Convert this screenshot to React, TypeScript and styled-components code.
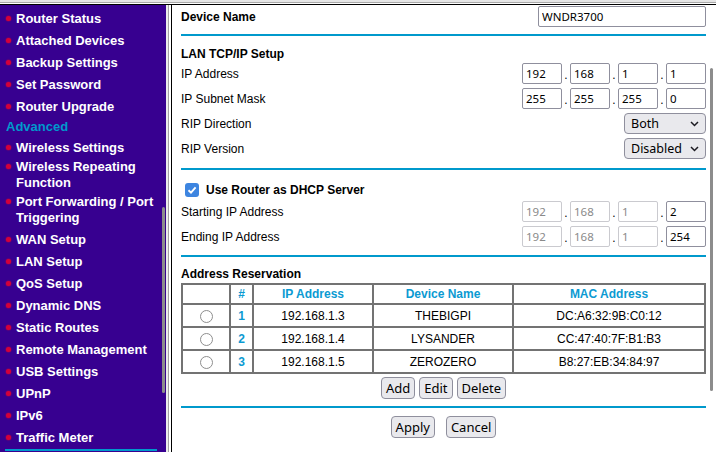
import React from "react";
import styled, { createGlobalStyle } from "styled-components";

const GlobalStyle = createGlobalStyle`
  html, body {
    margin: 0;
    padding: 0;
    background: #fff;
  }
  body {
    overflow: hidden;
    font-family: "Liberation Sans", Arial, sans-serif;
  }
  * {
    box-sizing: border-box;
  }
`;

const TEAL = "#0099cc";

const Page = styled.div`
  position: relative;
  width: 716px;
  height: 452px;
  display: flex;
  flex-direction: column;
  overflow: hidden;
  background: #fff;
`;

const TopEdge = styled.div`
  height: 5px;
  flex-shrink: 0;
  background: linear-gradient(
    to bottom,
    #e6e6e6 0 2px,
    #a9a9a9 2px 3px,
    #fff 3px 4px,
    #000 4px 5px
  );
`;

const Frames = styled.div`
  flex: 1;
  display: flex;
  min-height: 0;
`;

/* left menu frame */
const Sidebar = styled.nav`
  width: 166px;
  flex-shrink: 0;
  background: #370090;
  padding: 3px 8px 0 0;
  overflow: hidden;
  font: bold 13px/16px "Liberation Sans", Arial, sans-serif;
  color: #fff;
`;

const SideItem = styled.div<{ $multi?: boolean }>`
  display: flex;
  align-items: flex-start;
  padding: ${(p) => (p.$multi ? "0 0 3px" : "3px 0")};
`;

const Bullet = styled.span`
  flex: 0 0 5px;
  height: 5px;
  margin: 5px 5px 0 6px;
  border-radius: 50%;
  background: #d3003a;
  box-shadow: 0 0 1px 0.5px rgba(200, 0, 60, 0.55);
`;

const SideGroup = styled.div`
  color: ${TEAL};
  padding: 1px 0 2px 6px;
`;

const SideRule = styled.div`
  height: 2px;
  margin: 0 1px 0 5px;
  background: ${TEAL};
`;

const FrameSplit = styled.div`
  width: 5px;
  flex-shrink: 0;
  background: linear-gradient(
    to right,
    #ececec 0 2px,
    #a3a3a3 2px 3px,
    #fff 3px 5px
  );
`;

const Thumb = styled.div<{ $left: number; $top: number; $h: number }>`
  position: absolute;
  left: ${(p) => p.$left}px;
  top: ${(p) => p.$top}px;
  width: 3px;
  height: ${(p) => p.$h}px;
  border-radius: 2px;
  background: #8c8c8c;
`;

/* right content frame */
const Main = styled.main`
  flex: 1;
  display: flex;
  flex-direction: column;
  border-left: 1px solid #000;
  padding: 1px 10px 0 9px;
  font: 12px "Liberation Sans", Arial, sans-serif;
  color: #000;
`;

const Rule = styled.div<{ $mt: number }>`
  flex-shrink: 0;
  height: 2px;
  margin-top: ${(p) => p.$mt}px;
  background: ${TEAL};
`;

const FieldRow = styled.div`
  display: flex;
  align-items: center;
  justify-content: space-between;
  height: 21px;
`;

const Rows = styled.div<{ $mt: number }>`
  display: flex;
  flex-direction: column;
  gap: 4px;
  margin-top: ${(p) => p.$mt}px;
`;

const Label = styled.span<{ $bold?: boolean }>`
  font-weight: ${(p) => (p.$bold ? 700 : 400)};
`;

const Title = styled.div<{ $mt: number }>`
  font-weight: 700;
  line-height: 14px;
  margin-top: ${(p) => p.$mt}px;
`;

const TextInput = styled.input<{ $w: number; $muted?: boolean }>`
  width: ${(p) => p.$w}px;
  height: 21px;
  margin: 0;
  padding: 0 3px;
  border: 1px solid ${(p) => (p.$muted ? "#cacacf" : "#8f8f9d")};
  border-radius: 2px;
  background: #fff;
  font: 11.5px "Noto Sans", sans-serif;
  color: ${(p) => (p.$muted ? "#8a8a8a" : "#000")};
  outline: none;
`;

const IpGroup = styled.div`
  display: flex;
  align-items: stretch;
`;

const Dot = styled.span`
  width: 8px;
  align-self: flex-end;
  text-align: center;
  line-height: 17px;
`;

const SelectWrap = styled.div`
  position: relative;
  width: 82px;
  height: 21px;
`;

const Select = styled.select`
  appearance: none;
  width: 100%;
  height: 100%;
  margin: 0;
  padding: 0 0 0 6px;
  border: 1px solid #8f8f9d;
  border-radius: 4px;
  background: #e9e9ed;
  font: 12.5px "Noto Sans", sans-serif;
  color: #000;
  outline: none;
`;

const Chevron = styled.svg`
  position: absolute;
  right: 7px;
  top: 8px;
  pointer-events: none;
`;

const CheckRow = styled.div`
  display: flex;
  align-items: center;
  height: 19px;
  margin-top: 10px;
  font-weight: 700;
`;

const CheckBox = styled.span`
  display: inline-flex;
  align-items: center;
  justify-content: center;
  width: 14px;
  height: 14px;
  margin: 0 7px 0 4px;
  border-radius: 3px;
  background: #3d85e0;
`;

const Table = styled.table`
  width: 100%;
  margin-top: 2px;
  border: 1px solid #737373;
  border-collapse: separate;
  border-spacing: 0;
  table-layout: fixed;
`;

const Th = styled.th`
  height: 20px;
  padding: 0;
  border: 1px solid #737373;
  color: #0b9ad2;
  font-weight: 700;
  text-align: center;
`;

const Td = styled.td<{ $accent?: boolean }>`
  height: 23px;
  padding: 0;
  border: 1px solid #737373;
  text-align: center;
  color: ${(p) => (p.$accent ? "#0b9ad2" : "#000")};
  font-weight: ${(p) => (p.$accent ? 700 : 400)};
`;

const Radio = styled.span`
  display: inline-block;
  width: 13px;
  height: 13px;
  margin-top: 2px;
  vertical-align: middle;
  border: 1.5px solid #8e8e8e;
  border-radius: 50%;
  background: #fff;
`;

const ButtonRow = styled.div<{ $mt: number; $gap: number }>`
  display: flex;
  justify-content: center;
  gap: ${(p) => p.$gap}px;
  margin-top: ${(p) => p.$mt}px;
`;

const Button = styled.button`
  height: 22px;
  margin: 0;
  padding: 0 4px;
  border: 1px solid #8f8f9d;
  border-radius: 4px;
  background: #e9e9ed;
  font: 13px/20px "Noto Sans", sans-serif;
  color: #000;
`;

const menuTop = ["Router Status", "Attached Devices", "Backup Settings", "Set Password", "Router Upgrade"];
const menuAdvanced = [
  "Wireless Settings",
  "Wireless Repeating Function",
  "Port Forwarding / Port Triggering",
  "WAN Setup",
  "LAN Setup",
  "QoS Setup",
  "Dynamic DNS",
  "Static Routes",
  "Remote Management",
  "USB Settings",
  "UPnP",
  "IPv6",
  "Traffic Meter",
];
const multiLine = ["Wireless Repeating Function", "Port Forwarding / Port Triggering"];

const reservations = [
  { ip: "192.168.1.3", name: "THEBIGPI", mac: "DC:A6:32:9B:C0:12" },
  { ip: "192.168.1.4", name: "LYSANDER", mac: "CC:47:40:7F:B1:B3" },
  { ip: "192.168.1.5", name: "ZEROZERO", mac: "B8:27:EB:34:84:97" },
];

const IpFields = ({ parts, muted = 0 }: { parts: string[]; muted?: number }) => (
  <IpGroup>
    {parts.map((part, i) => (
      <React.Fragment key={i}>
        {i > 0 && <Dot>.</Dot>}
        <TextInput $w={40} $muted={i < muted} defaultValue={part} readOnly />
      </React.Fragment>
    ))}
  </IpGroup>
);

const Dropdown = ({ value }: { value: string }) => (
  <SelectWrap>
    <Select defaultValue={value}>
      <option>{value}</option>
    </Select>
    <Chevron width="9" height="6" viewBox="0 0 9 6">
      <path d="M1 1 L4.5 4.5 L8 1" fill="none" stroke="#1c1b22" strokeWidth="1.5" />
    </Chevron>
  </SelectWrap>
);

export default function App() {
  return (
    <>
      <GlobalStyle />
      <Page>
        <TopEdge />
        <Frames>
          <Sidebar>
            {menuTop.map((item) => (
              <SideItem key={item}>
                <Bullet />
                <span>{item}</span>
              </SideItem>
            ))}
            <SideGroup>Advanced</SideGroup>
            {menuAdvanced.map((item) => (
              <SideItem key={item} $multi={multiLine.includes(item)}>
                <Bullet />
                <span>{item}</span>
              </SideItem>
            ))}
            <SideRule />
          </Sidebar>
          <FrameSplit />
          <Main>
            <FieldRow>
              <Label $bold>Device Name</Label>
              <TextInput $w={168} defaultValue="WNDR3700" readOnly />
            </FieldRow>
            <Rule $mt={7} />

            <Title $mt={11}>LAN TCP/IP Setup</Title>
            <Rows $mt={2}>
              <FieldRow>
                <Label>IP Address</Label>
                <IpFields parts={["192", "168", "1", "1"]} />
              </FieldRow>
              <FieldRow>
                <Label>IP Subnet Mask</Label>
                <IpFields parts={["255", "255", "255", "0"]} />
              </FieldRow>
              <FieldRow>
                <Label>RIP Direction</Label>
                <Dropdown value="Both" />
              </FieldRow>
              <FieldRow>
                <Label>RIP Version</Label>
                <Dropdown value="Disabled" />
              </FieldRow>
            </Rows>
            <Rule $mt={9} />

            <CheckRow>
              <CheckBox>
                <svg width="10" height="10" viewBox="0 0 10 10">
                  <path d="M1.5 5.2 L4 7.6 L8.6 2.4" fill="none" stroke="#fff" strokeWidth="1.9" />
                </svg>
              </CheckBox>
              Use Router as DHCP Server
            </CheckRow>
            <Rows $mt={2}>
              <FieldRow>
                <Label>Starting IP Address</Label>
                <IpFields parts={["192", "168", "1", "2"]} muted={3} />
              </FieldRow>
              <FieldRow>
                <Label>Ending IP Address</Label>
                <IpFields parts={["192", "168", "1", "254"]} muted={3} />
              </FieldRow>
            </Rows>
            <Rule $mt={8} />

            <Title $mt={10}>Address Reservation</Title>
            <Table>
              <colgroup>
                <col style={{ width: 48 }} />
                <col style={{ width: 23 }} />
                <col style={{ width: 120 }} />
                <col style={{ width: 140 }} />
                <col />
              </colgroup>
              <thead>
                <tr>
                  <Th />
                  <Th>#</Th>
                  <Th>IP Address</Th>
                  <Th>Device Name</Th>
                  <Th>MAC Address</Th>
                </tr>
              </thead>
              <tbody>
                {reservations.map((r, i) => (
                  <tr key={r.mac}>
                    <Td>
                      <Radio />
                    </Td>
                    <Td $accent>{i + 1}</Td>
                    <Td>{r.ip}</Td>
                    <Td>{r.name}</Td>
                    <Td>{r.mac}</Td>
                  </tr>
                ))}
              </tbody>
            </Table>
            <ButtonRow $mt={3} $gap={4}>
              <Button>Add</Button>
              <Button>Edit</Button>
              <Button>Delete</Button>
            </ButtonRow>
            <Rule $mt={7} />
            <ButtonRow $mt={8} $gap={11}>
              <Button>Apply</Button>
              <Button>Cancel</Button>
            </ButtonRow>
          </Main>
        </Frames>
        <Thumb $left={162} $top={207} $h={186} />
        <Thumb $left={710} $top={68} $h={323} />
      </Page>
    </>
  );
}
